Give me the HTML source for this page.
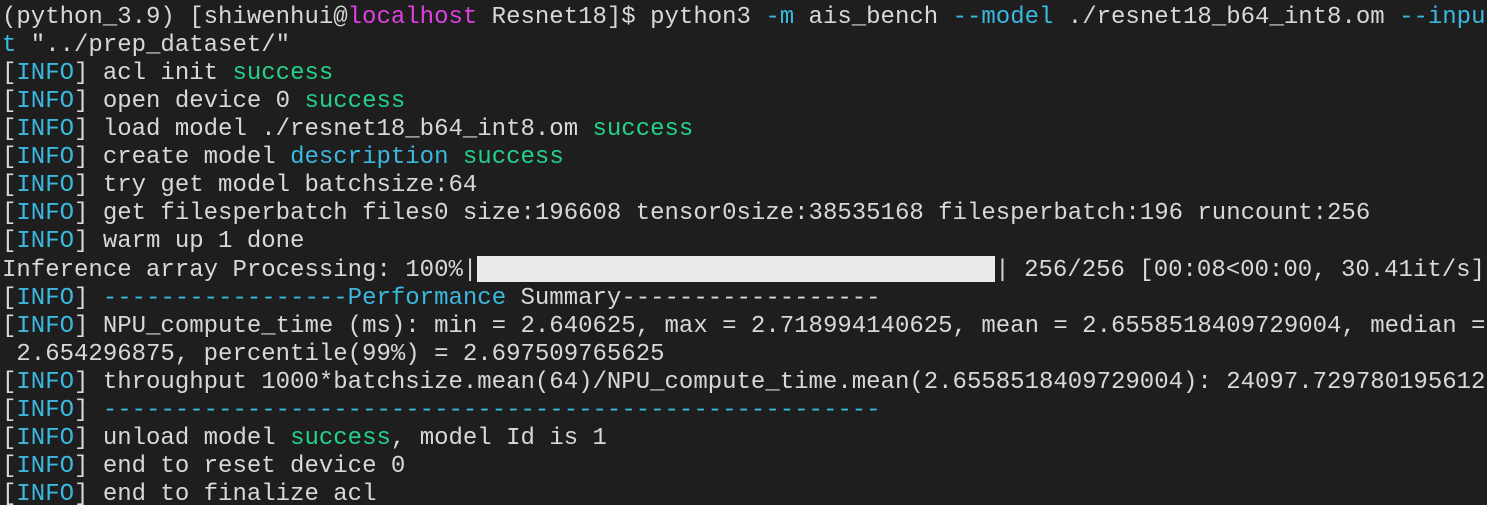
<!DOCTYPE html>
<html><head><meta charset="utf-8"><style>
html,body{margin:0;padding:0;background:#1e1e1e;width:1487px;height:505px;overflow:hidden}
pre{margin:0;padding:4px 0 0 2px;font-family:"Liberation Mono","DejaVu Sans Mono",monospace;font-size:24px;line-height:28px;color:#d8d8d8;white-space:pre}
.b{color:#3bb8e0}.g{color:#23d18b}.m{color:#e040e0}
.bar{display:inline-block;width:518px;height:26px;background:#ebebeb;vertical-align:-6px}
</style></head><body><pre>(python_3.9) [shiwenhui@<span class="m">localhost</span> Resnet18]$ python3 <span class="b">-m</span> ais_bench <span class="b">--model</span> ./resnet18_b64_int8.om <span class="b">--inpu</span>
<span class="b">t</span> "../prep_dataset/"
[<span class="b">INFO</span>] acl init <span class="g">success</span>
[<span class="b">INFO</span>] open device 0 <span class="g">success</span>
[<span class="b">INFO</span>] load model ./resnet18_b64_int8.om <span class="g">success</span>
[<span class="b">INFO</span>] create model <span class="b">description</span> <span class="g">success</span>
[<span class="b">INFO</span>] try get model batchsize:64
[<span class="b">INFO</span>] get filesperbatch files0 size:196608 tensor0size:38535168 filesperbatch:196 runcount:256
[<span class="b">INFO</span>] warm up 1 done
Inference array Processing: 100%|<span class="bar"></span>| 256/256 [00:08&lt;00:00, 30.41it/s]
[<span class="b">INFO</span>] <span class="b">-----------------Performance</span> Summary------------------
[<span class="b">INFO</span>] NPU_compute_time (ms): min = 2.640625, max = 2.718994140625, mean = 2.6558518409729004, median =
 2.654296875, percentile(99%) = 2.697509765625
[<span class="b">INFO</span>] throughput 1000*batchsize.mean(64)/NPU_compute_time.mean(2.6558518409729004): 24097.729780195612
[<span class="b">INFO</span>] <span class="b">------------------------------------------------------</span>
[<span class="b">INFO</span>] unload model <span class="g">success</span>, model Id is 1
[<span class="b">INFO</span>] end to reset device 0
[<span class="b">INFO</span>] end to finalize acl</pre></body></html>
